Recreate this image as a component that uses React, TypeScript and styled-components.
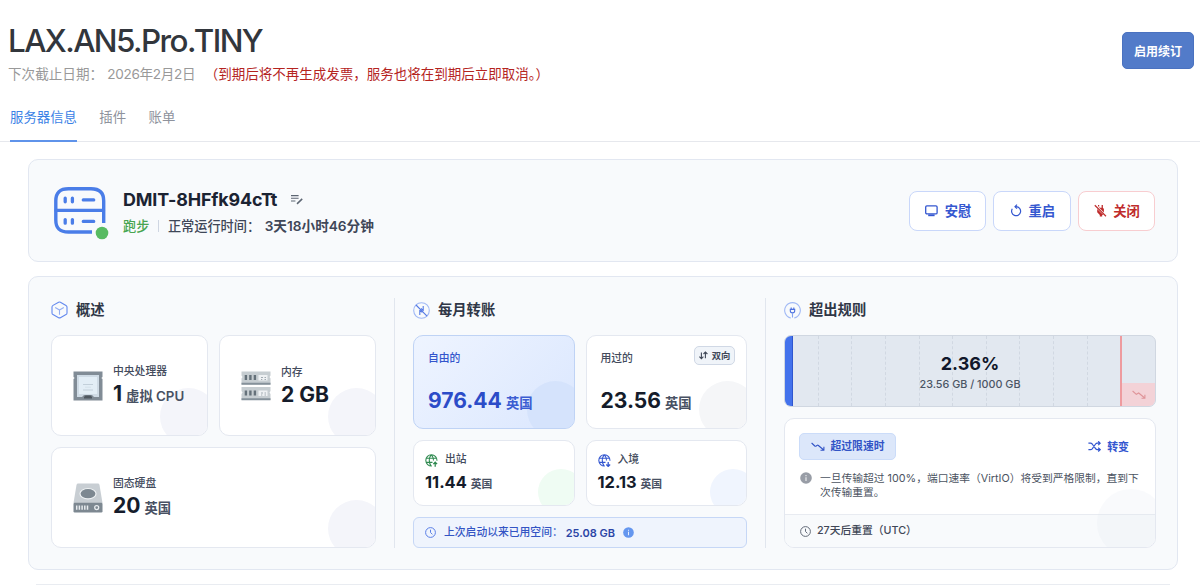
import React from "react";
import styled, { createGlobalStyle, css } from "styled-components";

const GlobalStyle = createGlobalStyle`
  * { box-sizing: border-box; }
  body {
    margin: 0;
    background: #fff;
    font-family: Inter, "Noto Sans CJK SC", sans-serif;
    color: #1e293b;
    -webkit-font-smoothing: antialiased;
  }
  h1, h2, h3, p { margin: 0; }
  svg { display: block; flex: none; }
`;

const Page = styled.div`
  height: 585px;
  overflow: hidden;
`;

const Header = styled.header`
  display: flex;
  justify-content: space-between;
  height: 97px;
  padding: 21px 6px 0 8px;
`;

const Title = styled.h1`
  font-size: 31.4px;
  line-height: 41px;
  font-weight: 500;
  letter-spacing: -1.58px;
  color: #32363c;
`;

const DueLine = styled.p`
  display: flex;
  margin-top: 2px;
  font-size: 13.6px;
  line-height: 20px;
  color: #999;
  white-space: nowrap;
`;

const DueDate = styled.span`
  margin-left: 4px;
  letter-spacing: -0.3px;
`;

const Warning = styled.span`
  margin-left: 16px;
  font-size: 13.5px;
  color: #b5241f;
`;

const HalfWidth = styled.span`
  font-feature-settings: "halt";
`;

const RenewButton = styled.button`
  width: 72px;
  height: 37px;
  margin-top: 11px;
  padding: 2px 0 0;
  border: 1px solid #4a72c0;
  border-radius: 5px;
  background: #527bc9;
  color: #fff;
  font: 600 12px/20px Inter, "Noto Sans CJK SC", sans-serif;
`;

const Tabs = styled.nav`
  display: flex;
  gap: 22.4px;
  height: 45px;
  padding-left: 10px;
  border-bottom: 1px solid #e6e8ed;
`;

const Tab = styled.a<{ $active?: boolean }>`
  height: 45px;
  padding-top: 10px;
  font-size: 13.4px;
  line-height: 20px;
  color: ${(p) => (p.$active ? "#3b82e6" : "#8e929c")};
  border-bottom: ${(p) => (p.$active ? "2px solid #5f93ea" : "none")};
`;

const Main = styled.main`
  display: flex;
  flex-direction: column;
  gap: 14px;
  padding: 17px 22px 0 28px;
`;

const panel = css`
  background: #f8fafc;
  border: 1px solid #e2e7f1;
  border-radius: 10px;
`;

const ServerPanel = styled.section`
  ${panel}
  display: flex;
  align-items: center;
  height: 103px;
  padding: 0 22px 0 25px;
`;

const ServerBadge = styled.div`
  padding-top: 5px;
`;

const ServerText = styled.div`
  flex: 1;
  margin-left: 13px;
  padding-top: 2px;
`;

const ServerName = styled.h2`
  display: flex;
  align-items: center;
  gap: 14px;
  font-size: 17.9px;
  line-height: 26px;
  font-weight: 700;
  letter-spacing: -0.15px;
  color: #1b2332;
`;

const ServerStatus = styled.p`
  display: flex;
  align-items: center;
  margin-top: 2px;
  font-size: 13.2px;
  line-height: 22px;
  font-weight: 500;
  color: #3f4758;
  white-space: nowrap;
`;

const Running = styled.span`
  color: #48a550;
`;

const StatusDivider = styled.span`
  width: 1px;
  height: 12px;
  margin: 0 8.5px 0 9px;
  background: #cfd6e2;
`;

const Uptime = styled.strong`
  margin-left: 4.5px;
  font-size: 13.65px;
  font-weight: 600;
`;

const Actions = styled.div`
  display: flex;
  gap: 7px;
`;

const ActionButton = styled.button<{ $danger?: boolean }>`
  display: flex;
  align-items: center;
  justify-content: center;
  gap: 6.5px;
  width: 77.3px;
  height: 40px;
  padding: 0 0 0 1px;
  border: 1px solid ${(p) => (p.$danger ? "#f8cdd0" : "#c9d7fa")};
  border-radius: 8px;
  background: #fff;
  color: ${(p) => (p.$danger ? "#bf2c2c" : "#3457d0")};
  font: 600 13.3px/20px Inter, "Noto Sans CJK SC", sans-serif;
`;

const DetailPanel = styled.section`
  ${panel}
  display: grid;
  grid-template-columns: 325px 1px 334px 1px 372px;
  column-gap: 18px;
  height: 294px;
  padding: 21px 22px;
`;

const Divider = styled.div`
  height: 250px;
  background: #e1e6ee;
`;

const Column = styled.div`
  display: flex;
  flex-direction: column;
`;

const ColumnTitle = styled.h3`
  display: flex;
  align-items: center;
  gap: 8px;
  height: 24px;
  margin-bottom: 13px;
  font-size: 14.3px;
  line-height: 20px;
  font-weight: 600;
  color: #303747;
`;

const CardGrid = styled.div`
  display: grid;
  grid-template-columns: 1fr 1fr;
  gap: 11px;
`;

const Blob = styled.i<{ $size?: number; $color?: string }>`
  position: absolute;
  right: -10px;
  bottom: -10px;
  width: ${(p) => p.$size ?? 57}px;
  height: ${(p) => p.$size ?? 57}px;
  border-radius: 50%;
  background: ${(p) => p.$color ?? "#f4f5fa"};
`;

const card = css`
  position: relative;
  overflow: hidden;
  background: #fff;
  border: 1px solid #e4e8f0;
  border-radius: 10px;
`;

const SpecCard = styled.div<{ $wide?: boolean }>`
  ${card}
  display: flex;
  align-items: center;
  gap: 10px;
  height: 101px;
  padding-left: 21px;
  ${(p) => p.$wide && "grid-column: 1 / -1;"}
`;

const SpecText = styled.div`
  padding-top: 2px;
`;

const Label = styled.div<{ $color?: string }>`
  position: relative;
  display: flex;
  align-items: center;
  gap: 7px;
  font-size: 10.8px;
  line-height: 16px;
  font-weight: 500;
  color: ${(p) => p.$color ?? "#434b5c"};
`;

const Value = styled.div<{ $size?: number; $color?: string }>`
  position: relative;
  display: flex;
  align-items: baseline;
  gap: 4px;
  font-size: ${(p) => p.$size ?? 21.1}px;
  line-height: 28px;
  font-weight: 700;
  color: ${(p) => p.$color ?? "#151c2b"};
  white-space: nowrap;
`;

const Unit = styled.span<{ $size?: number; $color?: string }>`
  font-size: ${(p) => p.$size ?? 13.3}px;
  font-weight: 600;
  color: ${(p) => p.$color ?? "#485163"};
`;

const UsageCard = styled.div<{ $free?: boolean }>`
  ${card}
  display: flex;
  flex-direction: column;
  justify-content: space-between;
  height: 94px;
  padding: 15px 14px 11px;
  ${(p) =>
    p.$free &&
    `background: linear-gradient(135deg, #eef4ff, #dbe7fe);
     border-color: #bfd3f5;`}
`;

const DirectionTag = styled.span`
  position: absolute;
  top: 10px;
  right: 11px;
  display: flex;
  align-items: center;
  justify-content: center;
  gap: 4px;
  width: 41px;
  height: 19px;
  border: 1px solid #d0d8e5;
  border-radius: 5px;
  background: #f0f4f9;
  font-size: 9.3px;
  line-height: 14px;
  font-weight: 600;
  color: #404858;
`;

const FlowCard = styled.div`
  ${card}
  height: 66px;
  padding: 11px 11px 0;
`;

const Notice = styled.div`
  display: flex;
  align-items: center;
  height: 31px;
  margin-top: 11px;
  padding-left: 11px;
  border: 1px solid #c6d7f6;
  border-radius: 6px;
  background: #eff4fd;
  font-size: 10.8px;
  line-height: 16px;
  font-weight: 500;
  color: #3354c4;
`;

const NoticeText = styled.span`
  margin-left: 8px;
`;

const NoticeValue = styled.strong`
  margin: 0 8px 0 3px;
  font-size: 11px;
  font-weight: 600;
  color: #2b45a6;
`;

const Meter = styled.div`
  position: relative;
  height: 72px;
  border: 1px solid #d0d7e1;
  border-radius: 7px;
  background: #e2e8f0;
  overflow: hidden;
`;

const MeterTicks = styled.div`
  display: grid;
  grid-template-columns: repeat(11, 1fr);
  height: 100%;
`;

const MeterCell = styled.i<{ $limit?: boolean; $last?: boolean }>`
  margin-right: ${(p) => (p.$limit ? "-1px" : "0")};
  border-right: ${(p) => (p.$last ? "none" : p.$limit ? "2px solid #ee9b9f" : "1px dashed #d1d8e2")};
`;

const MeterFill = styled.div`
  position: absolute;
  left: 0;
  top: 0;
  bottom: 0;
  width: 8px;
  background: #4372ec;
  border-right: 1px solid #2f56cf;
`;

const Throttle = styled.div`
  position: absolute;
  right: 0;
  bottom: 0;
  width: 33px;
  height: 23px;
  display: flex;
  align-items: center;
  justify-content: center;
  background: #f3d2d7;
`;

const MeterText = styled.div`
  position: absolute;
  inset: 0;
  display: flex;
  flex-direction: column;
  align-items: center;
  padding-top: 16px;
`;

const Percent = styled.strong`
  font-size: 18px;
  line-height: 24px;
  font-weight: 700;
  color: #10172a;
`;

const Quota = styled.span`
  margin-top: 1px;
  font-size: 10.8px;
  line-height: 16px;
  font-weight: 500;
  color: #4b5565;
`;

const RuleCard = styled.div`
  ${card}
  height: 130px;
  margin-top: 11px;
`;

const RuleTop = styled.div`
  display: flex;
  align-items: center;
  justify-content: space-between;
  padding: 14px 26px 0 14px;
`;

const RuleTag = styled.span`
  display: flex;
  align-items: center;
  justify-content: center;
  gap: 6px;
  width: 97px;
  height: 27px;
  border: 1px solid #cbdcf9;
  border-radius: 5px;
  background: #dce7fa;
  color: #3254c6;
  font-size: 10.8px;
  line-height: 16px;
  font-weight: 700;
`;

const SwitchLink = styled.a`
  display: flex;
  align-items: center;
  gap: 6px;
  font-size: 10.9px;
  line-height: 16px;
  font-weight: 700;
  color: #3457d0;
`;

const RuleText = styled.p`
  display: flex;
  gap: 8px;
  height: 54px;
  padding: 11.5px 12px 0 15px;
  font-size: 10.78px;
  line-height: 14.5px;
  font-weight: 400;
  color: #4b5361;
`;

const RuleFooter = styled.div`
  display: flex;
  align-items: center;
  gap: 6px;
  height: 33px;
  padding-left: 15px;
  border-top: 1px solid #e8ebf1;
  background: #f8fafc;
  font-size: 10.75px;
  line-height: 16px;
  font-weight: 500;
  color: #3f4757;
`;

const NextPanelEdge = styled.div`
  height: 1px;
  margin: 0 8px;
  background: #e9ecf1;
`;

const ServerIcon = () => (
  <svg width="56" height="53" viewBox="0 0 56 53" fill="none" stroke="#4a7de8" strokeWidth="3.4" strokeLinecap="round">
    <path d="M38 45H14.5C6 45 1.8 41.5 1.8 33V13.8C1.8 5.5 6 1.8 14.5 1.8H37C45.5 1.8 49.7 5.5 49.7 13.8V36" strokeLinecap="butt" />
    <path d="M2 23.4H49.5" strokeWidth="3.1" />
    <path d="M11.2 11.2V14.8M18.4 11.2V14.8M11.2 32.6V36.2M18.4 32.6V36.2" strokeWidth="3.3" />
    <path d="M29.2 12.9H39.8M29.2 34.4H39.8" strokeWidth="3.1" />
    <circle cx="48" cy="46" r="6.3" fill="#58bb62" stroke="none" />
  </svg>
);

const EditIcon = () => (
  <svg width="12" height="11" viewBox="0 0 12 11" fill="none" stroke="#5d6673" strokeWidth="1.1">
    <path d="M0 1.6H7.6M0 4.3H7.6M0 7H4.4" />
    <path d="M6 9.9L11.2 4.9" strokeWidth="1.5" />
  </svg>
);

const MonitorIcon = () => (
  <svg width="13" height="12" viewBox="0 0 13 12" fill="none" stroke="currentColor" strokeWidth="1.3">
    <rect x=".7" y=".9" width="11.4" height="8" rx="1.2" />
    <path d="M3.2 10.3H9.6" strokeWidth="1.8" />
  </svg>
);

const RestartIcon = () => (
  <svg width="12" height="13" viewBox="0 0 12 13" fill="none" stroke="currentColor" strokeWidth="1.2">
    <path d="M5.2 2.7H6.2A4.5 4.5 0 1 1 2.3 4.8" />
    <path d="M7 .7L5 2.7L7 4.7" />
  </svg>
);

const UnplugIcon = () => (
  <svg width="13" height="13" viewBox="0 0 13 13" fill="currentColor">
    <path d="M3.2 5L9.4 11H8.2V12.4H5.8V10.9L3.2 8.2Z" />
    <path d="M5.2 3.8L9.9 8.4V4.8L8.9 3.9V1H7.6V3.8H6L5.2 3Z" />
    <path d="M.8 1.2L12 12.2" stroke="currentColor" strokeWidth="1.2" />
    <path d="M4.6 1V2.6" stroke="currentColor" strokeWidth="1.2" />
  </svg>
);

const CubeIcon = () => (
  <svg width="17" height="18" viewBox="0 0 17 18" fill="none" stroke="#6288ee" strokeWidth="1.1" strokeLinejoin="round">
    <path d="M7.6 1.2Q8.5.8 9.4 1.2L15 4.4Q16 5 16 6V12Q16 13 15 13.6L9.4 16.7Q8.5 17.1 7.6 16.7L2 13.6Q1 13 1 12V6Q1 5 2 4.4Z" />
    <path d="M4.2 6.5L8.5 8.9L12.8 6.5M8.5 8.9V13.8" stroke="#91acf2" />
  </svg>
);

const TransferIcon = () => (
  <svg width="17" height="17" viewBox="0 0 17 17" fill="none" stroke="#5479e4" strokeWidth="1.1">
    <circle cx="8.5" cy="8.5" r="7.8" stroke="#a1b9f5" />
    <path d="M3 3L14 14.2" />
    <path d="M6.8 8V13M6.8 8.2L9.2 10.3M10.2 4V9M10.2 8.6L8 6.5" />
  </svg>
);

const RuleIcon = () => (
  <svg width="17" height="17" viewBox="0 0 17 17" fill="none" stroke="#4c70df" strokeWidth="1.1">
    <path d="M6.8 16A7.8 7.8 0 1 1 10.2 16" stroke="#a1b9f5" />
    <path d="M6.3 7.4H10.7V8.7A2.2 2.2 0 0 1 6.3 8.7ZM7.2 7.4V5.6M9.8 7.4V5.6" />
    <path d="M8.5 11V15.5" stroke="#86a3ee" />
  </svg>
);

const CpuIcon = () => (
  <svg width="30" height="30" viewBox="0 0 30 30">
    <path d="M.5 .5H29.5V6L28.3 7L29.5 8V29.5H.5V8L1.7 7L.5 6Z" fill="#818c96" />
    <path d="M4 4H26V26H21L19 24H11L9 26H4Z" fill="#cfdbe5" />
    <path d="M6 6H24V23H6Z" fill="#e3eef6" />
    <path d="M11 26L12.5 24.5H17.5L19 26V27.5H11Z" fill="#4f5860" />
    <path d="M10 13.5H20M10 19H20" stroke="#c3d0da" strokeWidth="1.2" />
    <path d="M12 16.2H18" stroke="#d6e1e9" />
  </svg>
);

const Stick = ({ y }: { y: number }) => (
  <g transform={`translate(0.5 ${y})`}>
    <path d="M0 0H29V4L28 5.5L29 7V13H0V7L1 5.5L0 4Z" fill="#c6cdd1" />
    <path d="M0 11.2H29V13.3H0Z" fill="#85919a" />
    <path d="M3.2 3.5H5.6V8.5H3.2ZM7.7 3.5H10.1V8.5H7.7ZM12.2 3.5H14.6V8.5H12.2Z" fill="#65717a" />
    <path d="M17 3.5H26V9H17Z" fill="#eef1f3" />
    <path d="M19.5 6H21.5M23 6H24.5M19.5 8H20.8M23 8H24.5" stroke="#a2abb2" />
  </g>
);

const MemoryIcon = () => (
  <svg width="30" height="30" viewBox="0 0 30 30">
    <Stick y={0.5} />
    <Stick y={16} />
  </svg>
);

const DiskIcon = () => (
  <svg width="30" height="30" viewBox="0 0 30 30">
    <path d="M5.2 .5H24.8Q26.2 .5 26.5 1.9L29.5 20H.5L3.5 1.9Q3.8 .5 5.2 .5Z" fill="#c8ced3" />
    <ellipse cx="15" cy="10.7" rx="8.6" ry="5.7" fill="#eef1f3" />
    <ellipse cx="15" cy="10.7" rx="7.4" ry="4.6" fill="#7d8891" />
    <rect x=".5" y="19.7" width="29" height="9.8" rx="1.2" fill="#7d8891" />
    <path d="M3.7 22.4V26.8M6.4 22.4V26.8M9.1 22.4V26.8M11.8 22.4V26.8M14.5 22.4V26.8" stroke="#e8ecef" strokeWidth="1.5" />
    <circle cx="23.7" cy="24.6" r="2" fill="none" stroke="#e8ecef" strokeWidth="1.3" />
  </svg>
);

const UpDownIcon = () => (
  <svg width="9" height="9" viewBox="0 0 9 9" fill="none" stroke="currentColor" strokeWidth="1.1">
    <path d="M2.4 1.5V7.8M.4 5.6L2.4 7.8L4.4 5.6M6.4 7.2V1M4.5 3L6.4 1L8.4 3" />
  </svg>
);

const GlobeIcon = ({ color, up }: { color: string; up?: boolean }) => (
  <svg width="13" height="13" viewBox="0 0 13 13" fill="none" stroke={color} strokeWidth="1.1">
    <path d="M6.8 12A5.6 5.6 0 1 1 12 6.8M6.2 .8C3.6 3.6 3.6 9 6.2 12M6.4 .8Q8.5 3 8.5 6.4M1.2 4.3H11.4M1.2 8.4H7.5" />
    <path d={up ? "M10.2 12.8V8.4M8.3 10.1L10.2 8.2L12.1 10.1" : "M10.2 8V12.2M8.3 10.5L10.2 12.4L12.1 10.5"} strokeWidth="1.3" />
  </svg>
);

const ClockIcon = ({ color }: { color: string }) => (
  <svg width="11" height="11" viewBox="0 0 11 11" fill="none" stroke={color}>
    <circle cx="5.5" cy="5.5" r="4.9" />
    <path d="M5.5 2.7V5.5L7.4 7.3" />
  </svg>
);

const InfoIcon = ({ color, size }: { color: string; size: number }) => (
  <svg width={size} height={size} viewBox="0 0 12 12">
    <circle cx="6" cy="6" r="5.8" fill={color} />
    <path d="M6 3V4.2M6 5.2V9" stroke="#fff" strokeOpacity=".85" strokeWidth="1.1" />
  </svg>
);

const TrendDownIcon = () => (
  <svg width="14" height="9" viewBox="0 0 14 9" fill="none" stroke="currentColor" strokeWidth="1.1" strokeLinejoin="round">
    <path d="M.6 1L3.8 4Q4.5 4.6 5.2 4L6 3.4Q6.7 2.9 7.4 3.5L12.7 8M12.9 4.8V8.2H9.5" />
  </svg>
);

const ShuffleIcon = () => (
  <svg width="13" height="11" viewBox="0 0 13 11" fill="none" stroke="currentColor" strokeWidth="1.2">
    <path d="M.4 2.2H2.5Q3.5 2.2 4.2 3L7.6 7.7Q8.2 8.6 9.3 8.6H12M.4 8.6H2.5Q3.5 8.6 4.2 7.8L7.6 3Q8.2 2.2 9.3 2.2H12M10.2 .3L12.2 2.2L10.2 4.1M10.2 6.7L12.2 8.6L10.2 10.5" />
  </svg>
);

const specs = [
  { icon: <CpuIcon />, label: "中央处理器", value: "1", unit: "虚拟 CPU" },
  { icon: <MemoryIcon />, label: "内存", value: "2 GB" },
  { icon: <DiskIcon />, label: "固态硬盘", value: "20", unit: "英国", wide: true },
];

export default function App() {
  return (
    <Page>
      <GlobalStyle />
      <Header>
        <div>
          <Title>LAX.AN5.Pro.TINY</Title>
          <DueLine>
            <span>下次截止日期：</span>
            <DueDate>2026年2月2日</DueDate>
            <Warning>
              <HalfWidth>（</HalfWidth>到期后将不再生成发票，服务也将在到期后立即取消<HalfWidth>。）</HalfWidth>
            </Warning>
          </DueLine>
        </div>
        <RenewButton>启用续订</RenewButton>
      </Header>
      <Tabs>
        <Tab $active>服务器信息</Tab>
        <Tab>插件</Tab>
        <Tab>账单</Tab>
      </Tabs>
      <Main>
        <ServerPanel>
          <ServerBadge><ServerIcon /></ServerBadge>
          <ServerText>
            <ServerName>
              DMIT-8HFfk94cTt
              <EditIcon />
            </ServerName>
            <ServerStatus>
              <Running>跑步</Running>
              <StatusDivider />
              正常运行时间：
              <Uptime>3天18小时46分钟</Uptime>
            </ServerStatus>
          </ServerText>
          <Actions>
            <ActionButton><MonitorIcon />安慰</ActionButton>
            <ActionButton><RestartIcon />重启</ActionButton>
            <ActionButton $danger><UnplugIcon />关闭</ActionButton>
          </Actions>
        </ServerPanel>

        <DetailPanel>
          <Column>
            <ColumnTitle><CubeIcon />概述</ColumnTitle>
            <CardGrid>
              {specs.map((s) => (
                <SpecCard key={s.label} $wide={s.wide}>
                  <Blob />
                  {s.icon}
                  <SpecText>
                    <Label>{s.label}</Label>
                    <Value>
                      {s.value}
                      {s.unit && <Unit>{s.unit}</Unit>}
                    </Value>
                  </SpecText>
                </SpecCard>
              ))}
            </CardGrid>
          </Column>
          <Divider />
          <Column>
            <ColumnTitle><TransferIcon />每月转账</ColumnTitle>
            <CardGrid>
              <UsageCard $free>
                <Blob $color="#d5e3fc" />
                <Label $color="#3355cc">自由的</Label>
                <Value $color="#2c4cc8">976.44<Unit $color="#3c5dd2">英国</Unit></Value>
              </UsageCard>
              <UsageCard>
                <Blob $color="#f5f6f8" />
                <Label>用过的</Label>
                <DirectionTag><UpDownIcon />双向</DirectionTag>
                <Value>23.56<Unit>英国</Unit></Value>
              </UsageCard>
              <FlowCard>
                <Blob $size={46} $color="#effcf3" />
                <Label><GlobeIcon color="#2f8a50" up />出站</Label>
                <Value $size={16.4}>11.44<Unit $size={10.8}>英国</Unit></Value>
              </FlowCard>
              <FlowCard>
                <Blob $size={46} $color="#f0f5fe" />
                <Label><GlobeIcon color="#3457d0" />入境</Label>
                <Value $size={16.4}>12.13<Unit $size={10.8}>英国</Unit></Value>
              </FlowCard>
            </CardGrid>
            <Notice>
              <ClockIcon color="#5a7fe6" />
              <NoticeText>上次启动以来已用空间：</NoticeText>
              <NoticeValue>25.08 GB</NoticeValue>
              <InfoIcon color="#6496ef" size={11} />
            </Notice>
          </Column>
          <Divider />
          <Column>
            <ColumnTitle><RuleIcon />超出规则</ColumnTitle>
            <Meter>
              <MeterTicks>
                {Array.from({ length: 11 }, (_, i) => (
                  <MeterCell key={i} $limit={i === 9} $last={i === 10} />
                ))}
              </MeterTicks>
              <MeterFill />
              <Throttle>
                <svg width="14" height="9" viewBox="0 0 14 9" fill="none" stroke="#df9499" strokeWidth="1.1">
                  <path d="M.6 1L4.3 4.3L6.7 3L12.7 8M12.9 4.8V8.2H9.5" />
                </svg>
              </Throttle>
              <MeterText>
                <Percent>2.36%</Percent>
                <Quota>23.56 GB / 1000 GB</Quota>
              </MeterText>
            </Meter>
            <RuleCard>
              <RuleTop>
                <RuleTag><TrendDownIcon />超过限速时</RuleTag>
                <SwitchLink><ShuffleIcon />转变</SwitchLink>
              </RuleTop>
              <RuleText>
                <InfoIcon color="#989da6" size={12} />
                <span>一旦传输超过 100%，端口速率（VirtIO）将受到严格限制，直到下次传输重置。</span>
              </RuleText>
              <RuleFooter>
                <ClockIcon color="#626a78" />
                27天后重置（UTC）
              </RuleFooter>
              <Blob $size={68} $color="rgba(226, 229, 240, 0.2)" />
            </RuleCard>
          </Column>
        </DetailPanel>
        <NextPanelEdge />
      </Main>
    </Page>
  );
}
